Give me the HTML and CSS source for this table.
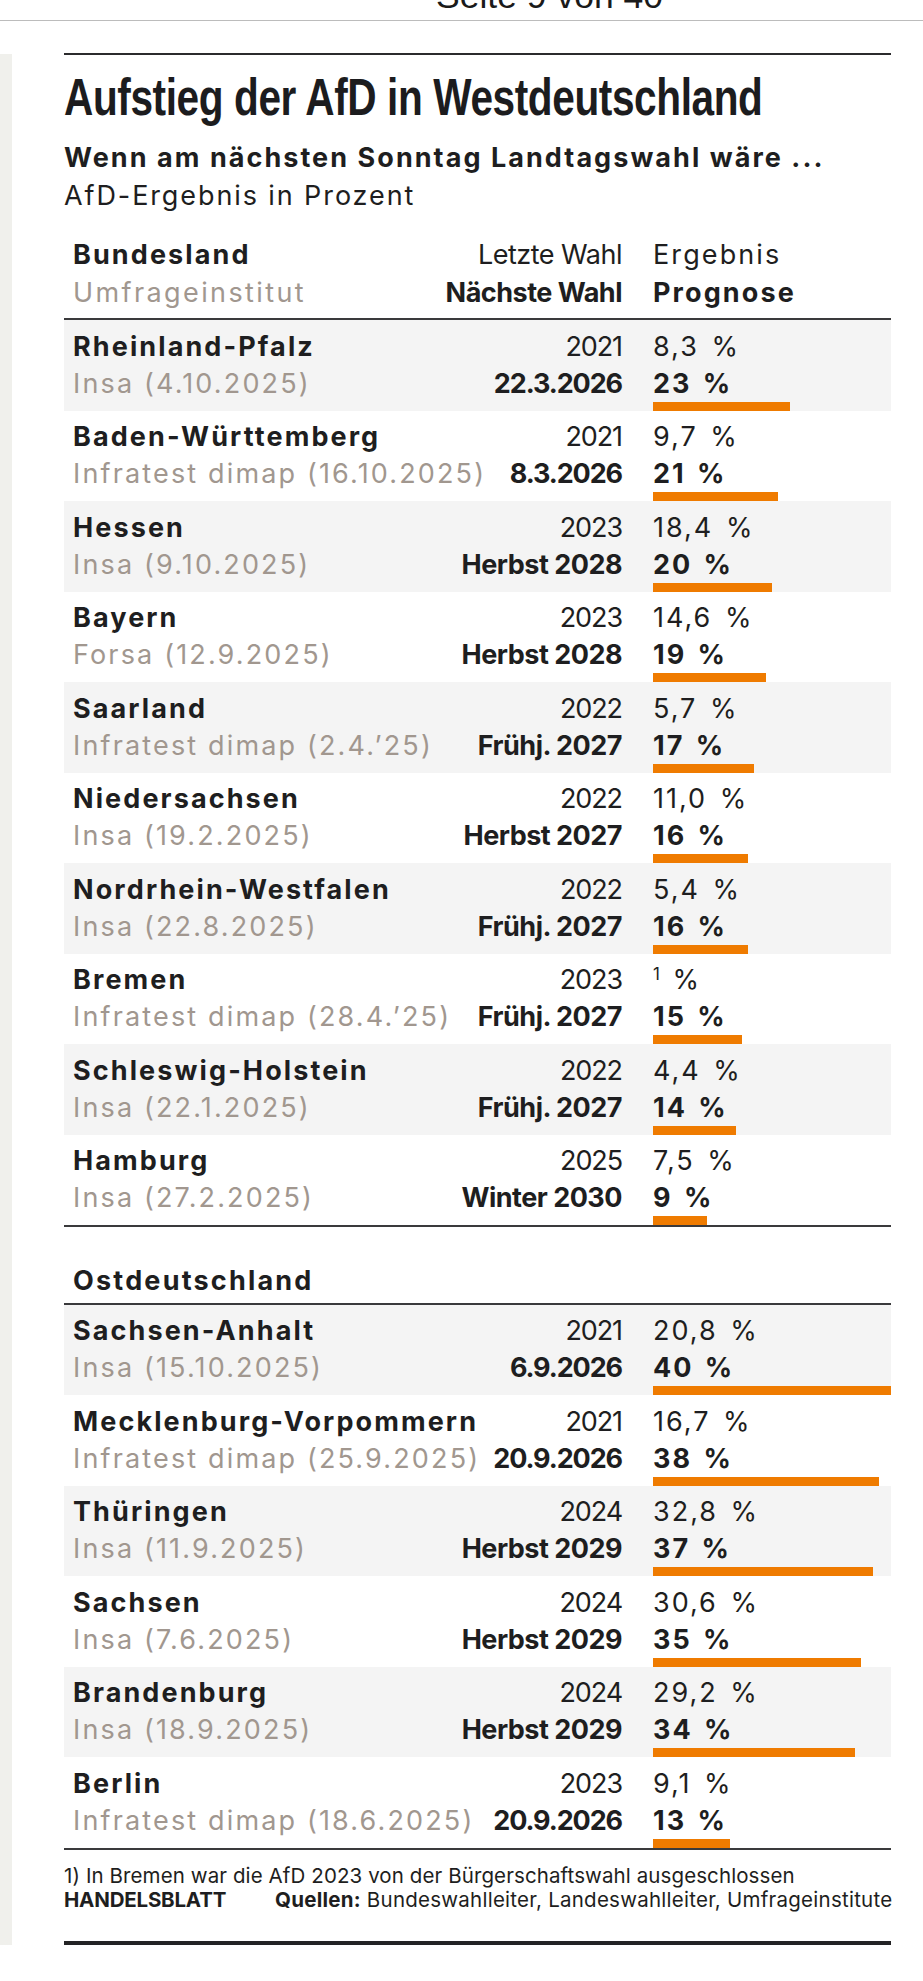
FILE: index.html
```html
<!DOCTYPE html>
<html lang="de">
<head>
<meta charset="utf-8">
<title>Aufstieg der AfD in Westdeutschland</title>
<link rel="stylesheet" href="styles.css">
</head>
<body>
<header class="pagebar"><span class="pagenum">Seite 9 von 40</span></header>
<div class="page">
  <div class="strip"></div>
  <article class="graphic">
    <h1 class="title"><span class="title-text">Aufstieg der AfD in Westdeutschland</span></h1>
    <h2 class="subtitle">Wenn am nächsten Sonntag Landtagswahl wäre ...</h2>
    <p class="unit">AfD-Ergebnis in Prozent</p>

    <div class="row head">
      <div class="c-name"><span class="strong">Bundesland</span><span class="inst">Umfrageinstitut</span></div>
      <div class="c-date"><span>Letzte Wahl</span><span class="strong">Nächste Wahl</span></div>
      <div class="c-res"><span>Ergebnis</span><span class="strong">Prognose</span></div>
    </div>

    <div class="group">
      <div class="row alt">
        <div class="c-name"><span class="strong">Rheinland-Pfalz</span><span class="inst">Insa (4.10.2025)</span></div>
        <div class="c-date"><span class="num">2021</span><span class="strong num">22.3.2026</span></div>
        <div class="c-res"><span>8,3 %</span><span class="strong">23 %</span><span class="bar" style="width:57.5%"></span></div>
      </div>
      <div class="row">
        <div class="c-name"><span class="strong">Baden-Württemberg</span><span class="inst">Infratest dimap (16.10.2025)</span></div>
        <div class="c-date"><span class="num">2021</span><span class="strong num">8.3.2026</span></div>
        <div class="c-res"><span>9,7 %</span><span class="strong">21 %</span><span class="bar" style="width:52.5%"></span></div>
      </div>
      <div class="row alt">
        <div class="c-name"><span class="strong">Hessen</span><span class="inst">Insa (9.10.2025)</span></div>
        <div class="c-date"><span class="num">2023</span><span class="strong">Herbst 2028</span></div>
        <div class="c-res"><span>18,4 %</span><span class="strong">20 %</span><span class="bar" style="width:50%"></span></div>
      </div>
      <div class="row">
        <div class="c-name"><span class="strong">Bayern</span><span class="inst">Forsa (12.9.2025)</span></div>
        <div class="c-date"><span class="num">2023</span><span class="strong">Herbst 2028</span></div>
        <div class="c-res"><span>14,6 %</span><span class="strong">19 %</span><span class="bar" style="width:47.5%"></span></div>
      </div>
      <div class="row alt">
        <div class="c-name"><span class="strong">Saarland</span><span class="inst">Infratest dimap (2.4.’25)</span></div>
        <div class="c-date"><span class="num">2022</span><span class="strong">Frühj. 2027</span></div>
        <div class="c-res"><span>5,7 %</span><span class="strong">17 %</span><span class="bar" style="width:42.5%"></span></div>
      </div>
      <div class="row">
        <div class="c-name"><span class="strong">Niedersachsen</span><span class="inst">Insa (19.2.2025)</span></div>
        <div class="c-date"><span class="num">2022</span><span class="strong">Herbst 2027</span></div>
        <div class="c-res"><span>11,0 %</span><span class="strong">16 %</span><span class="bar" style="width:40%"></span></div>
      </div>
      <div class="row alt">
        <div class="c-name"><span class="strong">Nordrhein-Westfalen</span><span class="inst">Insa (22.8.2025)</span></div>
        <div class="c-date"><span class="num">2022</span><span class="strong">Frühj. 2027</span></div>
        <div class="c-res"><span>5,4 %</span><span class="strong">16 %</span><span class="bar" style="width:40%"></span></div>
      </div>
      <div class="row">
        <div class="c-name"><span class="strong">Bremen</span><span class="inst">Infratest dimap (28.4.’25)</span></div>
        <div class="c-date"><span class="num">2023</span><span class="strong">Frühj. 2027</span></div>
        <div class="c-res"><span><sup class="fn">1</sup> %</span><span class="strong">15 %</span><span class="bar" style="width:37.5%"></span></div>
      </div>
      <div class="row alt">
        <div class="c-name"><span class="strong">Schleswig-Holstein</span><span class="inst">Insa (22.1.2025)</span></div>
        <div class="c-date"><span class="num">2022</span><span class="strong">Frühj. 2027</span></div>
        <div class="c-res"><span>4,4 %</span><span class="strong">14 %</span><span class="bar" style="width:35%"></span></div>
      </div>
      <div class="row">
        <div class="c-name"><span class="strong">Hamburg</span><span class="inst">Insa (27.2.2025)</span></div>
        <div class="c-date"><span class="num">2025</span><span class="strong">Winter 2030</span></div>
        <div class="c-res"><span>7,5 %</span><span class="strong">9 %</span><span class="bar" style="width:22.5%"></span></div>
      </div>
    </div>

    <div class="section-head"><span class="strong">Ostdeutschland</span></div>

    <div class="group">
      <div class="row alt">
        <div class="c-name"><span class="strong">Sachsen-Anhalt</span><span class="inst">Insa (15.10.2025)</span></div>
        <div class="c-date"><span class="num">2021</span><span class="strong num">6.9.2026</span></div>
        <div class="c-res"><span>20,8 %</span><span class="strong">40 %</span><span class="bar" style="width:100%"></span></div>
      </div>
      <div class="row">
        <div class="c-name"><span class="strong">Mecklenburg-Vorpommern</span><span class="inst">Infratest dimap (25.9.2025)</span></div>
        <div class="c-date"><span class="num">2021</span><span class="strong num">20.9.2026</span></div>
        <div class="c-res"><span>16,7 %</span><span class="strong">38 %</span><span class="bar" style="width:95%"></span></div>
      </div>
      <div class="row alt">
        <div class="c-name"><span class="strong">Thüringen</span><span class="inst">Insa (11.9.2025)</span></div>
        <div class="c-date"><span class="num">2024</span><span class="strong">Herbst 2029</span></div>
        <div class="c-res"><span>32,8 %</span><span class="strong">37 %</span><span class="bar" style="width:92.5%"></span></div>
      </div>
      <div class="row">
        <div class="c-name"><span class="strong">Sachsen</span><span class="inst">Insa (7.6.2025)</span></div>
        <div class="c-date"><span class="num">2024</span><span class="strong">Herbst 2029</span></div>
        <div class="c-res"><span>30,6 %</span><span class="strong">35 %</span><span class="bar" style="width:87.5%"></span></div>
      </div>
      <div class="row alt">
        <div class="c-name"><span class="strong">Brandenburg</span><span class="inst">Insa (18.9.2025)</span></div>
        <div class="c-date"><span class="num">2024</span><span class="strong">Herbst 2029</span></div>
        <div class="c-res"><span>29,2 %</span><span class="strong">34 %</span><span class="bar" style="width:85%"></span></div>
      </div>
      <div class="row">
        <div class="c-name"><span class="strong">Berlin</span><span class="inst">Infratest dimap (18.6.2025)</span></div>
        <div class="c-date"><span class="num">2023</span><span class="strong num">20.9.2026</span></div>
        <div class="c-res"><span>9,1 %</span><span class="strong">13 %</span><span class="bar" style="width:32.5%"></span></div>
      </div>
    </div>

    <footer class="notes">
      <p class="note">1) In Bremen war die AfD 2023 von der Bürgerschaftswahl ausgeschlossen</p>
      <p class="credits"><span class="strong brand">HANDELSBLATT</span><span class="sources"><span class="strong">Quellen:</span> Bundeswahlleiter, Landeswahlleiter, Umfrageinstitute</span></p>
    </footer>
  </article>
</div>
</body>
</html>
```

FILE: styles.css
```css
* {
  box-sizing: border-box;
  margin: 0;
  padding: 0;
}

body {
  margin: 0;
  width: 923px;
  background: #ffffff;
  color: #1e1e20;
  font-family: Inter, "Noto Sans", sans-serif;
  font-size: 27px;
}

.pagebar {
  height: 21px;
  border-bottom: 1px solid #bcbcbc;
  overflow: hidden;
}

.pagenum {
  display: block;
  padding-left: 436px;
  margin-top: -21px;
  font-family: "Liberation Sans", Arial, sans-serif;
  font-size: 35.5px;
  line-height: 34px;
  color: #1a1a1a;
  white-space: nowrap;
}

.page {
  display: flex;
  margin-top: 32px;
}

.strip {
  width: 12px;
  flex: none;
  background: #f0f0ec;
  margin-top: 1px;
}

.graphic {
  width: 827px;
  margin-left: 52px;
  border-top: 2px solid #2b2b2d;
  border-bottom: 4px solid #232325;
}

.title {
  margin-top: 17px;
  height: 51px;
  font-family: "Liberation Sans", Arial, sans-serif;
  font-weight: 700;
  font-size: 52px;
  line-height: 51px;
  letter-spacing: -0.5px;
  color: #1c1c1e;
  white-space: nowrap;
}

.title-text {
  display: inline-block;
  transform: scaleX(0.78);
  transform-origin: 0 50%;
}

.subtitle {
  margin-top: 16px;
  font-size: 27px;
  font-weight: 700;
  line-height: 38px;
  letter-spacing: 2.05px;
}

.unit {
  font-size: 27px;
  line-height: 38px;
  letter-spacing: 1.9px;
}

.strong {
  font-weight: 700;
}

.row {
  display: grid;
  grid-template-columns: minmax(0, 1fr) auto 269px;
  padding-left: 9px;
  height: 90.5px;
  padding-top: 7.5px;
  line-height: 37px;
  white-space: nowrap;
}

.row.alt {
  background: #f4f4f4;
}

.row > div {
  display: flex;
  flex-direction: column;
}

.c-name {
  letter-spacing: 2.1px;
}

.c-name .inst {
  letter-spacing: 2.15px;
}

.c-date {
  align-items: flex-end;
  padding-left: 8px;
  letter-spacing: -0.5px;
}

.c-date .num {
  letter-spacing: -1.1px;
}

.c-res {
  padding-left: 31px;
  letter-spacing: 2px;
  word-spacing: 3px;
}

.inst {
  color: #a1978f;
}

.bar {
  display: block;
  height: 9px;
  margin-top: auto;
  background: #ef7b00;
}

.row.head {
  height: auto;
  margin-top: 21px;
  padding-top: 0;
  padding-bottom: 6px;
  line-height: 38px;
  border-bottom: 2px solid #3a3a3c;
}

.row.head .c-name .inst {
  letter-spacing: 2.4px;
}

.row.head .c-res {
  letter-spacing: 2.1px;
}

.group {
  border-bottom: 2px solid #3a3a3c;
}

.section-head {
  padding-left: 9px;
  padding-top: 35px;
  padding-bottom: 3.5px;
  line-height: 37px;
  letter-spacing: 2.2px;
  border-bottom: 2px solid #3a3a3c;
}

.fn {
  font-size: 17px;
  vertical-align: 9px;
  line-height: 0;
  letter-spacing: 0;
}

.notes {
  padding-top: 14px;
  padding-bottom: 29px;
  font-size: 20.5px;
  line-height: 24px;
  letter-spacing: 0.1px;
  white-space: nowrap;
}

.credits {
  display: grid;
  grid-template-columns: 211px auto;
}

.brand {
  letter-spacing: -0.2px;
}

.sources {
  letter-spacing: 0.25px;
}
```
